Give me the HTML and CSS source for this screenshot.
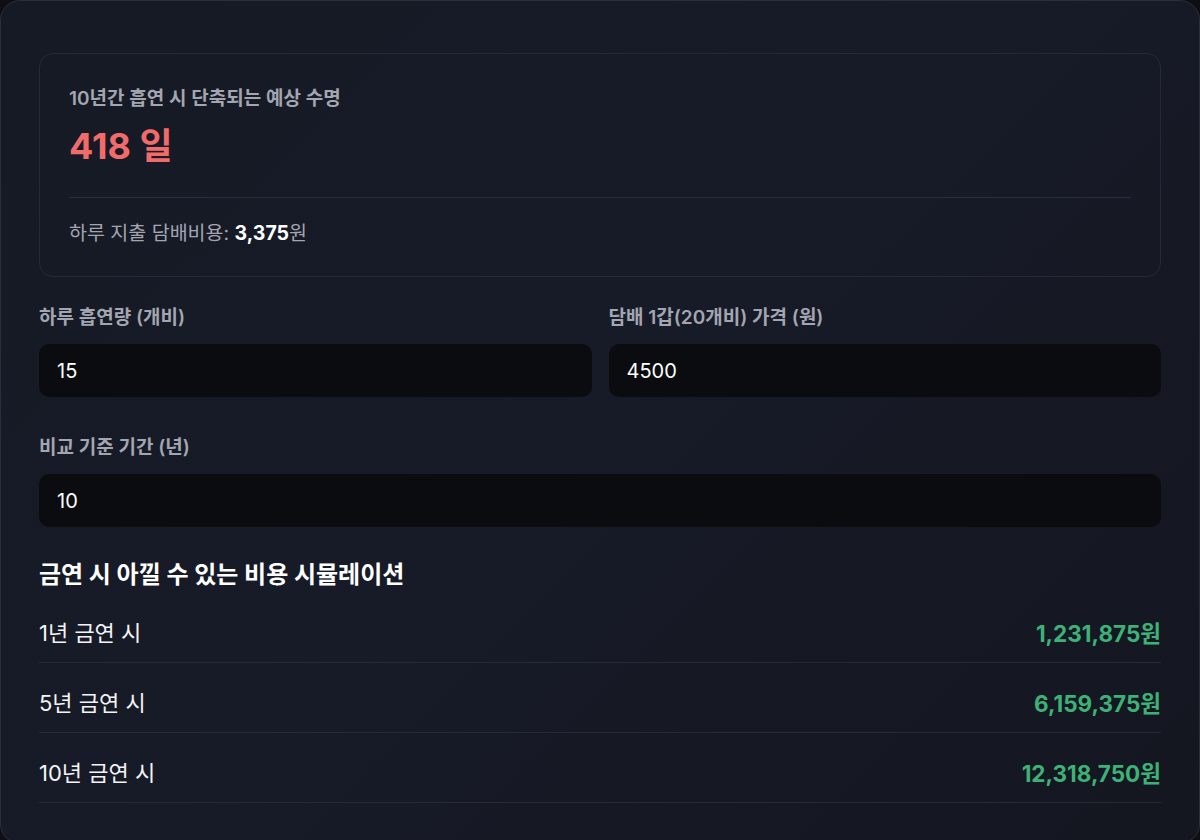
FILE: index.html
```html
<!DOCTYPE html>
<html lang="ko">
<head>
    <meta charset="UTF-8">
    <meta name="viewport" content="width=device-width, initial-scale=1.0">
    <title>흡연 비용 계산기</title>
    <link rel="stylesheet" href="styles.css">
</head>
<body>
    <div class="calc-card">
        <!-- 결과 요약 -->
        <div class="summary">
            <p class="summary-label">10년간 흡연 시 단축되는 예상 수명</p>
            <p class="summary-value">418 일</p>
            <div class="summary-divider"></div>
            <p class="summary-daily">하루 지출 담배비용: <strong>3,375</strong>원</p>
        </div>

        <!-- 입력 필드 -->
        <div class="field-grid">
            <div class="field">
                <label for="per-day">하루 흡연량 (개비)</label>
                <input id="per-day" type="text" value="15">
            </div>
            <div class="field">
                <label for="pack-price">담배 1갑(20개비) 가격 (원)</label>
                <input id="pack-price" type="text" value="4500">
            </div>
            <div class="field field-wide">
                <label for="years">비교 기준 기간 (년)</label>
                <input id="years" type="text" value="10">
            </div>
        </div>

        <h2 class="sim-title">금연 시 아낄 수 있는 비용 시뮬레이션</h2>
        <ul class="sim-list">
            <li class="sim-row"><span>1년 금연 시</span><span class="sim-amount">1,231,875원</span></li>
            <li class="sim-row"><span>5년 금연 시</span><span class="sim-amount">6,159,375원</span></li>
            <li class="sim-row"><span>10년 금연 시</span><span class="sim-amount">12,318,750원</span></li>
        </ul>
    </div>
</body>
</html>
```

FILE: styles.css
```css
* {
    box-sizing: border-box;
}

body {
    margin: 0;
    background-color: #0d0f15;
    font-family: "Inter", "Noto Sans CJK KR", sans-serif;
    color: #f3f4f6;
}

.calc-card {
    min-height: 840px;
    padding: 52px 38px 40px;
    border: 1px solid #2a2e3b;
    border-radius: 20px;
    background: linear-gradient(135deg, #161a25 0%, #171b27 50%, #141620 100%);
}

.summary {
    padding: 32px 29px 29px;
    border: 1px solid #262a37;
    border-radius: 14px;
}

.summary p {
    margin: 0;
}

.summary-label {
    font-size: 19px;
    font-weight: 600;
    line-height: 26px;
    color: #a3a6b1;
}

.summary .summary-value {
    margin-top: 14px;
    font-size: 36px;
    font-weight: 700;
    line-height: 40px;
    color: #f26b6b;
}

.summary-divider {
    height: 1px;
    margin: 31px 0 21px;
    background-color: #2a2e3c;
}

.summary-daily {
    font-size: 19.5px;
    line-height: 28px;
    color: #a3a6b1;
}

.summary-daily strong {
    font-weight: 700;
    color: #ffffff;
}

.field-grid {
    display: grid;
    grid-template-columns: 1fr 1fr;
    column-gap: 17px;
    row-gap: 38px;
    margin-top: 28px;
}

.field {
    display: flex;
    flex-direction: column;
    gap: 13px;
}

.field-wide {
    grid-column: 1 / 3;
}

.field label {
    font-size: 19px;
    font-weight: 600;
    line-height: 26px;
    color: #a3a6b1;
}

.field input {
    height: 53px;
    padding: 0 18px;
    border: none;
    border-radius: 10px;
    background-color: #0b0c10;
    color: #ffffff;
    font-family: inherit;
    font-size: 20px;
    outline: none;
}

.sim-title {
    margin: 32px 0 2px;
    font-size: 24px;
    font-weight: 700;
    line-height: 32px;
    color: #ffffff;
}

.sim-list {
    margin: 0;
    padding: 0;
    list-style: none;
}

.sim-row {
    display: flex;
    justify-content: space-between;
    align-items: center;
    padding: 24px 0 12px;
    line-height: 33px;
    border-bottom: 1px solid #262a35;
    font-size: 22px;
    color: #f3f4f6;
}

.sim-amount {
    font-size: 22.5px;
    font-weight: 700;
    color: #3db277;
}
```
